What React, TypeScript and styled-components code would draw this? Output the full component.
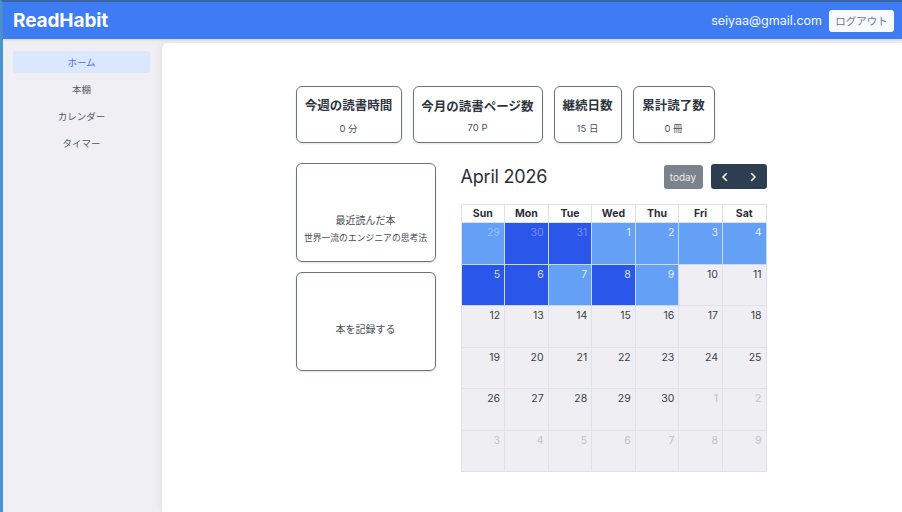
import React from "react";
import styled, { createGlobalStyle } from "styled-components";

const Global = createGlobalStyle`
  html, body { margin: 0; padding: 0; height: 100%; }
  body { font-family: Inter, "Noto Sans CJK JP", sans-serif; background: #ffffff; overflow: hidden; }
  #root { height: 100%; }
`;

const Frame = styled.div`
  height: 512px;
  display: flex;
  flex-direction: column;
  border-left: 3px solid #4a93cf;
  border-top: 2px solid #3b67a8;
  box-sizing: border-box;
`;

const Header = styled.header`
  height: 37px;
  flex: none;
  background: #3e7cf4;
  display: flex;
  align-items: center;
  justify-content: space-between;
  padding: 0 8px 0 10px;
  position: relative;
  z-index: 2;
  box-shadow: 0 1px 3px rgba(0,0,0,0.12);
`;

const Logo = styled.div`
  color: #fff;
  font-weight: 700;
  font-size: 19px;
  letter-spacing: -0.1px;
`;

const UserArea = styled.div`
  display: flex;
  align-items: center;
  gap: 7px;
`;

const Email = styled.span`
  color: #f2f6ff;
  font-size: 12.5px;
`;

const LogoutButton = styled.button`
  height: 22px;
  width: 65px;
  border: none;
  border-radius: 3px;
  background: #f7f9fc;
  color: #6b7a99;
  font-size: 10.5px;
  font-family: "Noto Sans CJK JP", sans-serif;
  padding: 0;
`;

const Body = styled.div`
  flex: 1;
  display: flex;
  background: #efeff4;
  min-height: 0;
`;

const Sidebar = styled.nav`
  width: 157px;
  flex: none;
  display: flex;
  flex-direction: column;
  padding: 12px 10px 0 10px;
  box-sizing: border-box;
  gap: 5px;
`;

const NavItem = styled.div<{ $active?: boolean }>`
  height: 22px;
  display: flex;
  align-items: center;
  justify-content: center;
  border-radius: 3px;
  font-size: 9.5px;
  font-family: "Noto Sans CJK JP", sans-serif;
  color: ${(p) => (p.$active ? "#4a6fe8" : "#555a63")};
  background: ${(p) => (p.$active ? "#dae7fc" : "transparent")};
`;

const Main = styled.main`
  flex: 1;
  margin-top: 4px;
  margin-left: 2px;
  background: #ffffff;
  border-top-left-radius: 6px;
  box-shadow: -3px 0 8px rgba(0,0,0,0.05);
  padding-top: 43px;
  padding-right: 2px;
  display: flex;
  justify-content: center;
`;

const Container = styled.div`
  width: 471px;
  display: flex;
  flex-direction: column;
  gap: 20px;
`;

const StatRow = styled.div`
  display: flex;
  gap: 11px;
`;

const Card = styled.div<{ $w: number; $h: number; $pt?: number }>`
  width: ${(p) => p.$w}px;
  height: ${(p) => p.$h}px;
  box-sizing: border-box;
  border: 1px solid #6b7280;
  border-radius: 6px;
  box-shadow: 0 1px 2px rgba(0,0,0,0.12);
  display: flex;
  flex-direction: column;
  align-items: center;
  justify-content: center;
  padding-top: ${(p) => p.$pt ?? 0}px;
  font-family: "Noto Sans CJK JP", sans-serif;
  color: #333a44;
`;

const StatTitle = styled.div`
  font-size: 12.5px;
  font-weight: 700;
  color: #2f3540;
  margin-bottom: 7px;
`;

const StatValue = styled.div`
  font-size: 9.5px;
  color: #4b5260;
  font-family: Inter, "Noto Sans CJK JP", sans-serif;
`;

const LowerRow = styled.div`
  display: flex;
  gap: 25px;
`;

const LeftCol = styled.div`
  display: flex;
  flex-direction: column;
  gap: 10px;
`;

const CardText = styled.div<{ $small?: boolean }>`
  font-size: ${(p) => (p.$small ? "8.8px" : "10px")};
  color: #454b56;
  margin-top: ${(p) => (p.$small ? "4px" : "0")};
`;

const Calendar = styled.div`
  width: 306px;
  display: flex;
  flex-direction: column;
`;

const CalToolbar = styled.div`
  height: 27px;
  display: flex;
  align-items: center;
  justify-content: space-between;
  margin-bottom: 14px;
`;

const CalTitle = styled.div`
  font-size: 18px;
  color: #2b2f36;
  letter-spacing: -0.2px;
`;

const ToolGroup = styled.div`
  display: flex;
  gap: 8px;
  align-items: center;
`;

const TodayButton = styled.button`
  width: 39px;
  height: 24px;
  border: none;
  border-radius: 3px;
  background: #7a838d;
  color: #e8ebee;
  font-size: 10px;
  font-family: Inter, sans-serif;
  padding: 0;
`;

const NavGroup = styled.div`
  display: flex;
  background: #2c3e50;
  border-radius: 3px;
  height: 25px;
`;

const NavBtn = styled.button`
  width: 28px;
  height: 25px;
  border: none;
  background: transparent;
  color: #fff;
  padding: 0;
  display: flex;
  align-items: center;
  justify-content: center;
`;

const Grid = styled.div`
  display: grid;
  grid-template-columns: repeat(7, 1fr);
  border: 1px solid #e2e2e6;
  border-right: none;
  border-bottom: none;
`;

const HeadCell = styled.div`
  height: 17px;
  display: flex;
  align-items: center;
  justify-content: center;
  font-size: 10.5px;
  font-weight: 700;
  color: #2a2e35;
  background: #fff;
  border-right: 1px solid #e2e2e6;
  border-bottom: 1px solid #e2e2e6;
`;

type Kind = "light" | "dark" | "none";

const DayCell = styled.div<{ $kind: Kind; $other: boolean }>`
  height: 41.5px;
  box-sizing: border-box;
  padding: 3px 4px 0 0;
  text-align: right;
  font-size: 10.5px;
  border-right: 1px solid ${(p) => (p.$kind === "none" ? "#e2e2e6" : "#c9d8f7")};
  border-bottom: 1px solid ${(p) => (p.$kind === "none" ? "#e2e2e6" : "#c9d8f7")};
  background: ${(p) =>
    p.$kind === "light" ? "#64a0f6" : p.$kind === "dark" ? "#2b56ea" : "#efeff3"};
  color: ${(p) =>
    p.$kind === "none"
      ? p.$other
        ? "#c0c2c8"
        : "#3a3f47"
      : p.$other
      ? "rgba(255,255,255,0.35)"
      : "rgba(255,255,255,0.85)"};
`;

const stats = [
  { title: "今週の読書時間", value: "0 分", w: 106 },
  { title: "今月の読書ページ数", value: "70 P", w: 130 },
  { title: "継続日数", value: "15 日", w: 68 },
  { title: "累計読了数", value: "0 冊", w: 82 },
];

const days: { d: number; other: boolean; kind: Kind }[] = [];
const first = [29, 30, 31];
const kinds: Record<string, Kind> = {
  "p29": "light", "p30": "dark", "p31": "dark",
  "1": "light", "2": "light", "3": "light", "4": "light",
  "5": "dark", "6": "dark", "7": "light", "8": "dark", "9": "light",
};
first.forEach((d) => days.push({ d, other: true, kind: kinds["p" + d] }));
for (let d = 1; d <= 30; d++) days.push({ d, other: false, kind: kinds[String(d)] || "none" });
for (let d = 1; d <= 9; d++) days.push({ d, other: true, kind: "none" });

const Chevron = ({ dir }: { dir: "l" | "r" }) => (
  <svg width="10" height="10" viewBox="0 0 10 10">
    <path
      d={dir === "l" ? "M6.5 1.5 L3 5 L6.5 8.5" : "M3.5 1.5 L7 5 L3.5 8.5"}
      fill="none"
      stroke="#fff"
      strokeWidth="1.6"
      strokeLinecap="round"
      strokeLinejoin="round"
    />
  </svg>
);

export default function App() {
  return (
    <>
      <Global />
      <Frame>
        <Header>
          <Logo>ReadHabit</Logo>
          <UserArea>
            <Email>seiyaa@gmail.com</Email>
            <LogoutButton>ログアウト</LogoutButton>
          </UserArea>
        </Header>
        <Body>
          <Sidebar>
            <NavItem $active>ホーム</NavItem>
            <NavItem>本棚</NavItem>
            <NavItem>カレンダー</NavItem>
            <NavItem>タイマー</NavItem>
          </Sidebar>
          <Main>
            <Container>
              <StatRow>
                {stats.map((s) => (
                  <Card key={s.title} $w={s.w} $h={57}>
                    <StatTitle>{s.title}</StatTitle>
                    <StatValue>{s.value}</StatValue>
                  </Card>
                ))}
              </StatRow>
              <LowerRow>
                <LeftCol>
                  <Card $w={140} $h={99} $pt={30}>
                    <CardText>最近読んだ本</CardText>
                    <CardText $small>世界一流のエンジニアの思考法</CardText>
                  </Card>
                  <Card $w={140} $h={99} $pt={14}>
                    <CardText>本を記録する</CardText>
                  </Card>
                </LeftCol>
                <Calendar>
                  <CalToolbar>
                    <CalTitle>April 2026</CalTitle>
                    <ToolGroup>
                      <TodayButton>today</TodayButton>
                      <NavGroup>
                        <NavBtn><Chevron dir="l" /></NavBtn>
                        <NavBtn><Chevron dir="r" /></NavBtn>
                      </NavGroup>
                    </ToolGroup>
                  </CalToolbar>
                  <Grid>
                    {["Sun", "Mon", "Tue", "Wed", "Thu", "Fri", "Sat"].map((d) => (
                      <HeadCell key={d}>{d}</HeadCell>
                    ))}
                    {days.map((c, i) => (
                      <DayCell key={i} $kind={c.kind} $other={c.other}>
                        {c.d}
                      </DayCell>
                    ))}
                  </Grid>
                </Calendar>
              </LowerRow>
            </Container>
          </Main>
        </Body>
      </Frame>
    </>
  );
}
